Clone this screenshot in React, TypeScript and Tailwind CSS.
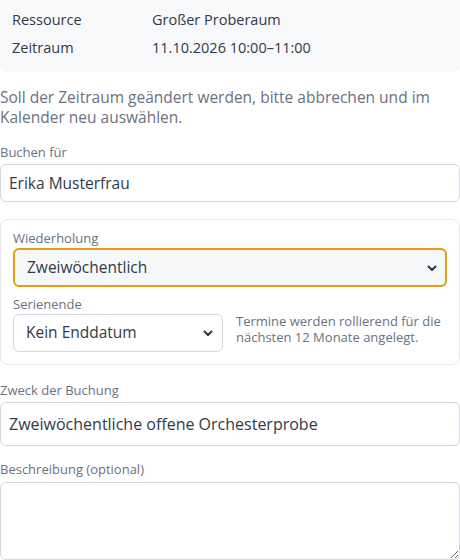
import { useState } from "react";

const Chevron = () => (
  <svg className="pointer-events-none absolute right-[9px] top-1/2 -translate-y-1/2 text-[#2f3746]" width="12" height="12" viewBox="0 0 24 24" fill="none" stroke="currentColor" strokeWidth="4" strokeLinecap="round" strokeLinejoin="round">
    <polyline points="5 9 12 16 19 9" />
  </svg>
);

export default function App() {
  const [recurrence, setRecurrence] = useState("biweekly");
  const [seriesEnd, setSeriesEnd] = useState("none");
  const [bookFor, setBookFor] = useState("Erika Musterfrau");
  const [purpose, setPurpose] = useState("Zweiwöchentliche offene Orchesterprobe");
  const [description, setDescription] = useState("");

  return (
    <div className="w-[460px] h-[560px] overflow-hidden bg-white text-[#323a48] font-['Open_Sans',sans-serif]">
      {/* Summary */}
      <div className="bg-[#f8f9fb] rounded-b-lg pt-1.5 pb-2.5 px-3 text-[14.5px]">
        <div className="flex h-7 items-center">
          <span className="w-[140px]">Ressource</span>
          <span>Großer Proberaum</span>
        </div>
        <div className="flex h-7 items-center">
          <span className="w-[140px]">Zeitraum</span>
          <span>11.10.2026 10:00–11:00</span>
        </div>
      </div>

      <p className="mt-[15px] text-[15.5px] leading-5 text-[#6b7280]">
        Soll der Zeitraum geändert werden, bitte abbrechen und im Kalender neu auswählen.
      </p>

      <div className="mt-4 flex flex-col gap-[3px]">
        <label className="text-[13px] leading-[18px] text-[#6b7280]">Buchen für</label>
        <input
          value={bookFor}
          onChange={e => setBookFor(e.target.value)}
          className="h-[38px] w-full rounded-md border border-[#d5d8de] px-2 text-[15.5px] text-[#323a48] outline-none"
        />
      </div>

      {/* Recurrence */}
      <div className="mt-[17px] rounded-lg border border-[#e6e8ec] px-3 pt-[9px] pb-3">
        <div className="flex flex-col gap-[1px]">
          <label className="text-[13px] leading-[18px] text-[#6b7280]">Wiederholung</label>
          <div className="relative">
            <select
              value={recurrence}
              onChange={e => setRecurrence(e.target.value)}
              className="h-[39px] w-full appearance-none rounded-md border-2 border-[#e59c12] bg-[#f7f8fa] pl-3 pr-8 text-[15.5px] text-[#323a48] outline-none"
            >
              <option value="none">Keine</option>
              <option value="weekly">Wöchentlich</option>
              <option value="biweekly">Zweiwöchentlich</option>
              <option value="monthly">Monatlich</option>
            </select>
            <Chevron />
          </div>
        </div>

        <div className="mt-2 flex flex-col gap-[1px]">
          <label className="text-[13px] leading-[18px] text-[#6b7280]">Serienende</label>
          <div className="flex items-center gap-[13px]">
            <div className="relative w-[210px] shrink-0">
              <select
                value={seriesEnd}
                onChange={e => setSeriesEnd(e.target.value)}
                className="h-[38px] w-full appearance-none rounded-md border border-[#d5d8de] bg-white pl-3 pr-8 text-[15.5px] text-[#323a48] outline-none"
              >
                <option value="none">Kein Enddatum</option>
                <option value="date">Bis Datum</option>
                <option value="count">Nach Anzahl</option>
              </select>
              <Chevron />
            </div>
            <p className="-mt-2 text-[13px] leading-4 text-[#6b7280]">
              Termine werden rollierend für die nächsten 12 Monate angelegt.
            </p>
          </div>
        </div>
      </div>

      <div className="mt-4 flex flex-col gap-[3px]">
        <label className="text-[13px] leading-[18px] text-[#6b7280]">Zweck der Buchung</label>
        <input
          value={purpose}
          onChange={e => setPurpose(e.target.value)}
          className="h-11 w-full rounded-md border border-[#d5d8de] px-2 text-[16px] text-[#323a48] outline-none"
        />
      </div>

      <div className="mt-[14px] flex flex-col gap-[4px]">
        <label className="text-[13px] leading-[18px] text-[#6b7280]">Beschreibung (optional)</label>
        <textarea
          value={description}
          onChange={e => setDescription(e.target.value)}
          rows={4}
          className="h-[78px] w-full rounded-md border border-[#d5d8de] px-2 py-1.5 text-[15px] outline-none"
        />
      </div>
    </div>
  );
}
